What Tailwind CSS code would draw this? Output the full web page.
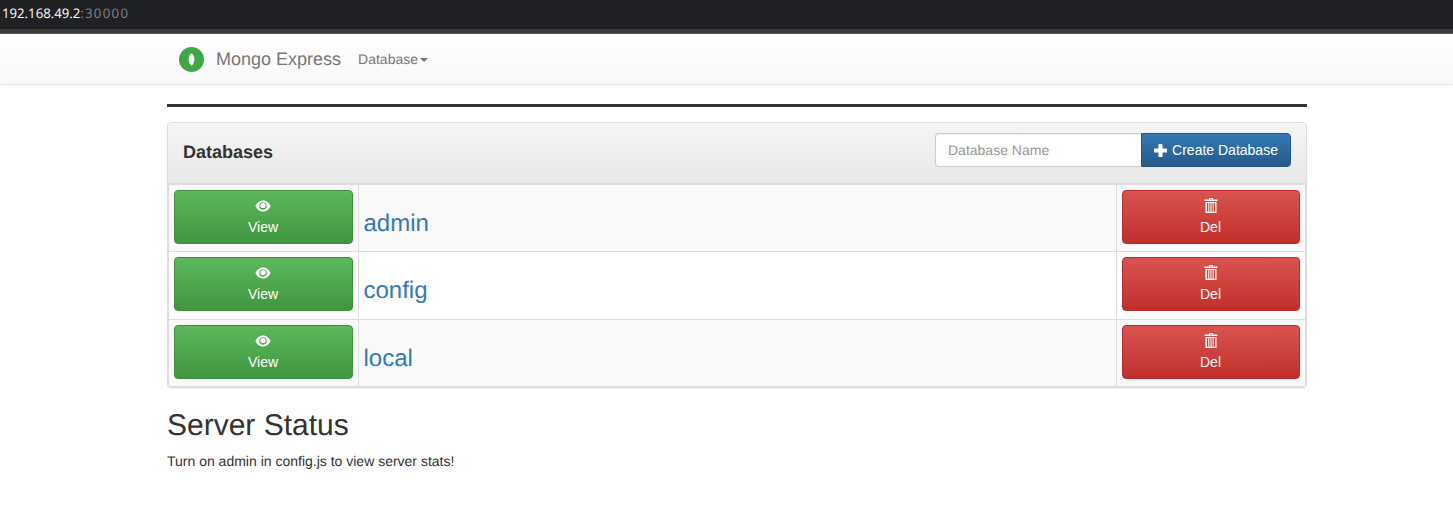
<!DOCTYPE html>
<html>
<head>
<meta charset="utf-8">
<script src="https://cdn.jsdelivr.net/npm/@tailwindcss/browser@4"></script>
</head>
<body class="bg-white font-['Liberation_Sans',sans-serif] text-[14px] text-[#333] overflow-hidden [text-rendering:geometricPrecision]">
<div class="h-[29px] bg-[#202124] flex items-start pl-[2px] pt-[4px] font-['Open_Sans',sans-serif] text-[13.200px] leading-[19px]"><span class="text-white">192.168.49.2</span><span class="text-[#80868b] tracking-[1.300px]">:30000</span></div>
<div class="h-[5px] bg-[#3c3c3c] border-b border-[#5a5a5a]"></div>
<nav class="h-[51px] bg-gradient-to-b from-white to-[#f8f8f8] border-b border-[#e7e7e7] shadow-[0_1px_3px_rgba(0,0,0,0.05)]">
  <div class="w-[1140px] ml-[167px] flex items-center h-[50px]">
    <svg class="ml-[12px] w-[25px] h-[25px]" viewBox="0 0 25 25"><circle cx="12.500" cy="12.500" r="12.500" fill="#3fa648"/><path d="M12.500 6C16.300 9.500 16.300 15.500 12.500 19C8.700 15.500 8.700 9.500 12.500 6Z" fill="#fff"/></svg>
    <span class="ml-[12px] text-[18px] leading-[20px] text-[#777]">Mongo Express</span>
    <span class="ml-[17px] text-[#777] leading-[20px]">Database</span>
    <span class="ml-[2px] mt-[1px] w-0 h-0 border-x-[4px] border-x-transparent border-t-[4px] border-t-[#777]"></span>
  </div>
</nav>
<main class="w-[1140px] ml-[167px]">
  <div class="mt-[19px] h-[3px] bg-[#333]"></div>
  <section class="mt-[15px] border border-[#ddd] rounded-[4px] shadow-[0_1px_1px_rgba(0,0,0,0.05)] overflow-hidden">
    <header class="h-[61px] bg-gradient-to-b from-[#f5f5f5] to-[#e8e8e8] border-b border-[#ddd] flex items-start justify-between pl-[15px] pr-[15px] pt-[10px]">
      <h3 class="mt-[9px] text-[18px] font-bold leading-[20px]">Databases</h3>
      <div class="flex h-[34px]">
        <div class="w-[206px] bg-white border border-[#ccc] border-r-0 rounded-l-[4px] pl-[12px] text-[#999] leading-[32px] shadow-[inset_0_1px_1px_rgba(0,0,0,0.075)]">Database Name</div>
        <button class="w-[150px] flex items-center justify-center gap-[5px] rounded-r-[4px] border border-[#245580] bg-gradient-to-b from-[#337ab7] to-[#265a88] text-white">
          <svg class="w-[13px] h-[13px]" viewBox="0 0 13 13"><path d="M4.500 .5Q4.500 0 5 0h3Q8.500 0 8.500 .5V4.500h4q.5 0 .5.500v3q0 .5-.5.500h-4v4q0 .5-.5.500H5q-.5 0-.5-.5v-4h-4Q0 8.500 0 8V5Q0 4.500 .5 4.500h4z" fill="#fff"/></svg>
          <span>Create Database</span>
        </button>
      </div>
    </header>
    <div class="border border-[#ddd] mt-0">
      <div class="grid grid-cols-[190px_758px_1fr] h-[67px] bg-[#f9f9f9] border-b border-[#ddd]">
        <div class="border-r border-[#ddd] pl-[5px] pt-[5px]">
          <button class="w-[179px] h-[54px] pr-[1px] rounded-[4px] border border-[#3e8f3e] bg-gradient-to-b from-[#5cb85c] to-[#419641] text-white flex flex-col items-center">
            <svg class="mt-[9px] w-[16px] h-[12px]" viewBox="0 0 16 12"><path fill-rule="evenodd" d="M8 .5C11.500.5 14.400 3 15.600 6 14.400 9 11.500 11.500 8 11.500S1.600 9 .4 6C1.600 3 4.500.5 8 .5ZM8 2.200A3.800 3.800 0 1 0 8 9.800 3.800 3.800 0 0 0 8 2.200Z" fill="#fff"/><circle cx="8" cy="5.500" r="2.600" fill="#fff"/></svg>
            <span class="mt-[5px] leading-[20px]">View</span>
          </button>
        </div>
        <div class="border-r border-[#ddd] pl-[4.500px] pt-[24px]"><a class="text-[24px] leading-[30px] text-[#337ab7]">admin</a></div>
        <div class="pl-[5px] pt-[5px]">
          <button class="w-[178px] h-[54px] pr-[1px] rounded-[4px] border border-[#b92c28] bg-gradient-to-b from-[#d9534f] to-[#c12e2a] text-white flex flex-col items-center">
            <svg class="mt-[7px] w-[14px] h-[15px]" viewBox="0 0 14 15" fill="#fff"><path d="M5 0h4v1.500h4.500V3H.500V1.500H5ZM6 .8v.7h2V.8Z"/><path fill-rule="evenodd" d="M1.500 4h11v11h-11ZM3 5v8.800h1.300V5Zm2.300 0v8.800h1.200V5Zm2.200 0v8.800h1.200V5Zm2.200 0v8.800H11V5Z"/></svg>
            <span class="mt-[4px] leading-[20px]">Del</span>
          </button>
        </div>
      </div>
      <div class="grid grid-cols-[190px_758px_1fr] h-[68px] bg-white border-b border-[#ddd]">
        <div class="border-r border-[#ddd] pl-[5px] pt-[5px]">
          <button class="w-[179px] h-[54px] pr-[1px] rounded-[4px] border border-[#3e8f3e] bg-gradient-to-b from-[#5cb85c] to-[#419641] text-white flex flex-col items-center">
            <svg class="mt-[9px] w-[16px] h-[12px]" viewBox="0 0 16 12"><path fill-rule="evenodd" d="M8 .5C11.500.5 14.400 3 15.600 6 14.400 9 11.500 11.500 8 11.500S1.600 9 .4 6C1.600 3 4.500.5 8 .5ZM8 2.200A3.800 3.800 0 1 0 8 9.800 3.800 3.800 0 0 0 8 2.200Z" fill="#fff"/><circle cx="8" cy="5.500" r="2.600" fill="#fff"/></svg>
            <span class="mt-[5px] leading-[20px]">View</span>
          </button>
        </div>
        <div class="border-r border-[#ddd] pl-[4.500px] pt-[24px]"><a class="text-[24px] leading-[30px] text-[#337ab7]">config</a></div>
        <div class="pl-[5px] pt-[5px]">
          <button class="w-[178px] h-[54px] pr-[1px] rounded-[4px] border border-[#b92c28] bg-gradient-to-b from-[#d9534f] to-[#c12e2a] text-white flex flex-col items-center">
            <svg class="mt-[7px] w-[14px] h-[15px]" viewBox="0 0 14 15" fill="#fff"><path d="M5 0h4v1.500h4.500V3H.500V1.500H5ZM6 .8v.7h2V.8Z"/><path fill-rule="evenodd" d="M1.500 4h11v11h-11ZM3 5v8.800h1.300V5Zm2.300 0v8.800h1.200V5Zm2.200 0v8.800h1.200V5Zm2.200 0v8.800H11V5Z"/></svg>
            <span class="mt-[4px] leading-[20px]">Del</span>
          </button>
        </div>
      </div>
      <div class="grid grid-cols-[190px_758px_1fr] h-[66px] bg-[#f9f9f9]">
        <div class="border-r border-[#ddd] pl-[5px] pt-[5px]">
          <button class="w-[179px] h-[54px] pr-[1px] rounded-[4px] border border-[#3e8f3e] bg-gradient-to-b from-[#5cb85c] to-[#419641] text-white flex flex-col items-center">
            <svg class="mt-[9px] w-[16px] h-[12px]" viewBox="0 0 16 12"><path fill-rule="evenodd" d="M8 .5C11.500.5 14.400 3 15.600 6 14.400 9 11.500 11.500 8 11.500S1.600 9 .4 6C1.600 3 4.500.5 8 .5ZM8 2.200A3.800 3.800 0 1 0 8 9.800 3.800 3.800 0 0 0 8 2.200Z" fill="#fff"/><circle cx="8" cy="5.500" r="2.600" fill="#fff"/></svg>
            <span class="mt-[5px] leading-[20px]">View</span>
          </button>
        </div>
        <div class="border-r border-[#ddd] pl-[4.500px] pt-[24px]"><a class="text-[24px] leading-[30px] text-[#337ab7]">local</a></div>
        <div class="pl-[5px] pt-[5px]">
          <button class="w-[178px] h-[54px] pr-[1px] rounded-[4px] border border-[#b92c28] bg-gradient-to-b from-[#d9534f] to-[#c12e2a] text-white flex flex-col items-center">
            <svg class="mt-[7px] w-[14px] h-[15px]" viewBox="0 0 14 15" fill="#fff"><path d="M5 0h4v1.500h4.500V3H.500V1.500H5ZM6 .8v.7h2V.8Z"/><path fill-rule="evenodd" d="M1.500 4h11v11h-11ZM3 5v8.800h1.300V5Zm2.300 0v8.800h1.200V5Zm2.200 0v8.800h1.200V5Zm2.200 0v8.800H11V5Z"/></svg>
            <span class="mt-[4px] leading-[20px]">Del</span>
          </button>
        </div>
      </div>
    </div>
  </section>
  <h2 class="mt-[21px] text-[30px] leading-[33px] font-normal">Server Status</h2>
  <p class="mt-[9px] leading-[20px]">Turn on admin in config.js to view server stats!</p>
</main>
</body>
</html>
